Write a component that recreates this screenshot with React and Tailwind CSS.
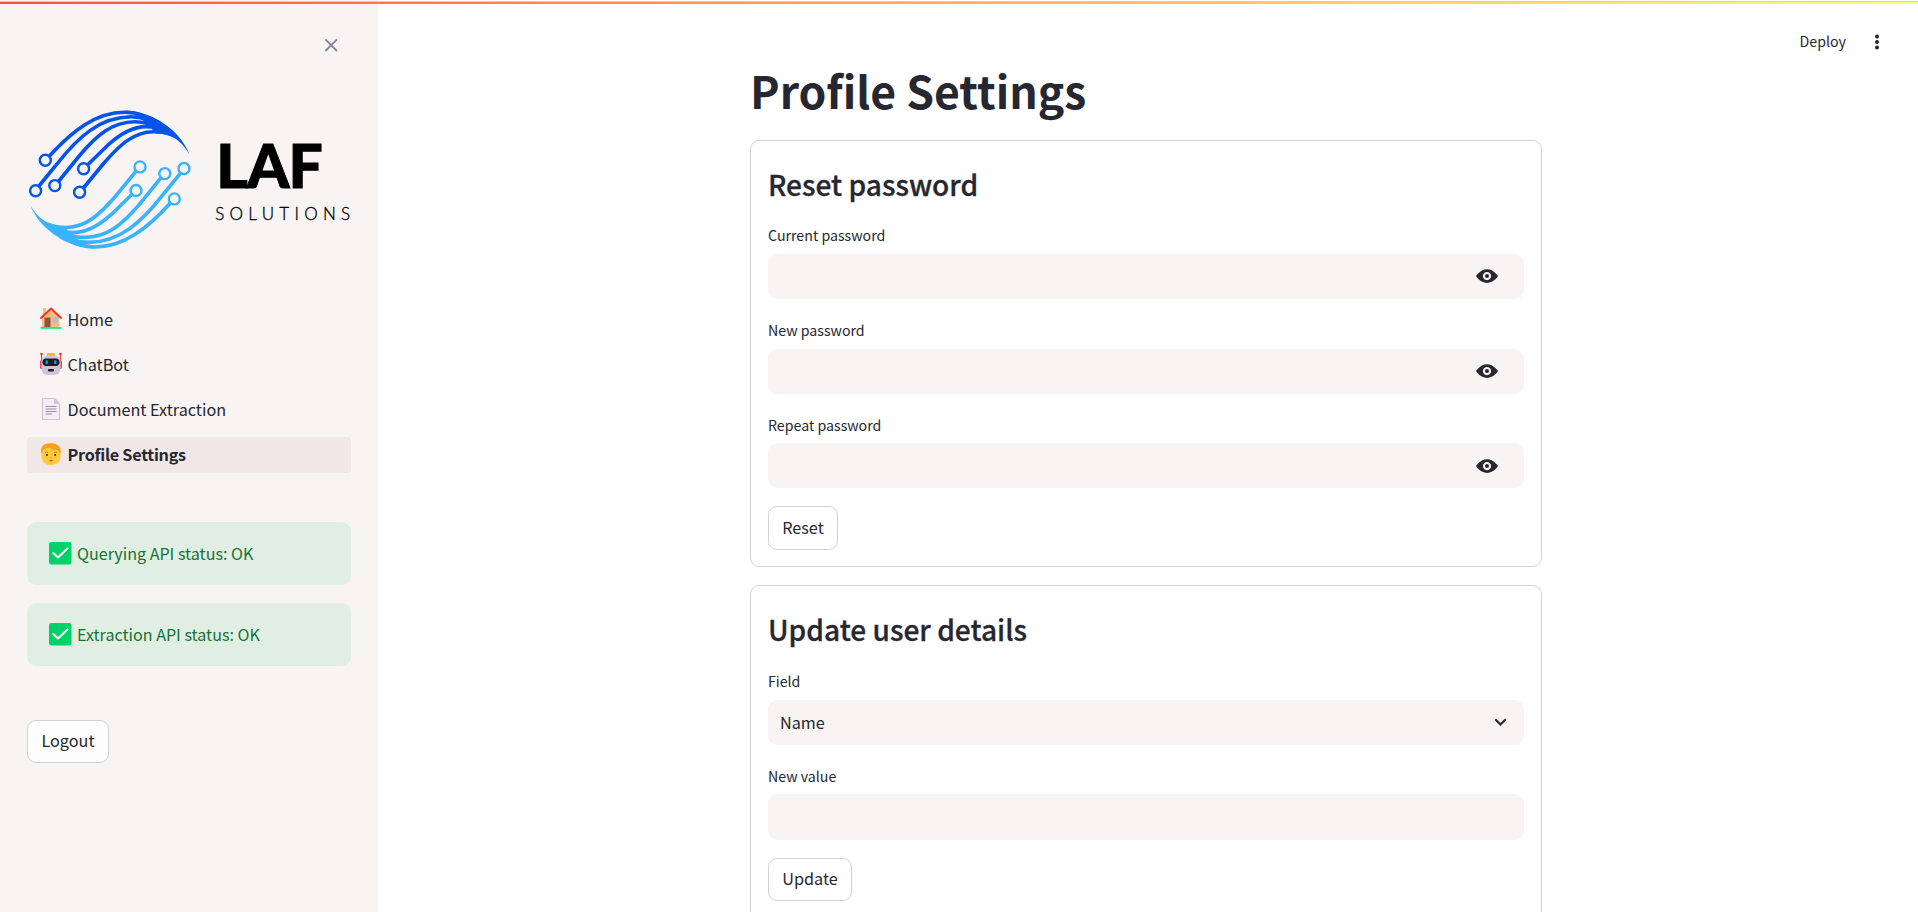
import React from "react";

const Swoosh = () => (
  <>
    <path d="M49.5 156C72 131 96 112 125 112.200C138 112.500 150 117 160 123" />
    <path d="M39 186L57 164C78 137 100 117 131 116.800C145 117 155 122 162 127" />
    <path d="M58.500 181.500L80 155C97 135 112 122 135 121.800C148 121.800 156 126 163 130" />
    <path d="M88 164.500L108 145C120 134 132 126.800 146 126.600C155 126.600 161 129 166 132" />
    <path d="M83.500 188L104 163C119 146 133 131.500 154 131.700C162 131.700 168 133 172 135" />
    <path
      stroke="none"
      fill="currentColor"
      d="M125 110.600C148 111 179 127 189.500 154.500C184 145 175 133.300 155 133.300L152 129L148 124.500L143 120.500L137 116Z"
    />
    <g strokeWidth="2.400">
      <circle cx="45.300" cy="160.300" r="5.500" />
      <circle cx="35.600" cy="190.700" r="5.500" />
      <circle cx="54.800" cy="185.600" r="5.500" />
      <circle cx="83.600" cy="168.700" r="5.500" />
      <circle cx="79.600" cy="192.300" r="5.500" />
    </g>
  </>
);

const Logo = () => (
  <svg width="360" height="180" viewBox="0 90 360 180" className="block shrink-0">
    <g fill="none" stroke="currentColor" strokeWidth="3.600" className="text-[#0554ea]">
      <Swoosh />
    </g>
    <g
      fill="none"
      stroke="currentColor"
      strokeWidth="3.600"
      className="text-[#38b3ff]"
      transform="rotate(180 109.800 179.600)"
    >
      <Swoosh />
    </g>
    <text
      x="216.300"
      y="188"
      fontFamily="Lato, sans-serif"
      fontWeight="900"
      fontSize="60.500"
      stroke="#000"
      strokeWidth="1"
      textLength="106.500"
      lengthAdjust="spacing"
    >
      LAF
    </text>
    <text
      x="215.200"
      y="219.800"
      fontFamily="Lato, sans-serif"
      fontWeight="300"
      fontSize="17"
      stroke="#000"
      strokeWidth=".3"
      textLength="135"
    >
      SOLUTIONS
    </text>
  </svg>
);

const House = () => (
  <svg width="24" height="24" viewBox="0 0 24 24">
    <path fill="#f6bd7c" d="M4 1h3v5l5-4 8 7v12H3V9l1-1z" />
    <path fill="none" stroke="#f8312f" strokeWidth="2" strokeLinecap="round" strokeLinejoin="round" d="M2 11L12 1.500L22 11" />
    <path fill="#8c5543" d="M5.500 10.500h6V20h-6z" />
    <circle cx="10.300" cy="15" r=".6" fill="#4a2c23" />
    <path fill="#83cbff" d="M14 10.500h5v5h-5z" />
    <path fill="#00f387" d="M1.500 20h21v1.800h-21z" />
  </svg>
);

const Robot = () => (
  <svg width="24" height="24" viewBox="0 0 24 24">
    <path stroke="#f8312f" strokeWidth="1" d="M2.500 2v10M21.500 2v10" />
    <circle cx="2.500" cy="2" r="1.300" fill="#f8312f" />
    <circle cx="21.500" cy="2" r="1.300" fill="#f8312f" />
    <rect x="1" y="8" width="3" height="9" rx="1.500" fill="#f3485d" />
    <rect x="20" y="8" width="3" height="9" rx="1.500" fill="#f3485d" />
    <rect x="8" y="1" width="8" height="4" rx="1.300" fill="#ffb02e" />
    <rect x="2.500" y="3.500" width="19" height="19.500" rx="6" fill="#cdc4d6" />
    <rect x="3.500" y="6.500" width="17" height="7.500" rx="3.700" fill="#1c1c22" />
    <rect x="6.600" y="8.300" width="2.200" height="3.900" rx="1" fill="#00a6ed" />
    <rect x="15.200" y="8.300" width="2.200" height="3.900" rx="1" fill="#00a6ed" />
    <rect x="9" y="17" width="6" height="2.600" rx="1" fill="#1c1c22" />
  </svg>
);

const Doc = () => (
  <svg width="24" height="24" viewBox="0 0 24 24">
    <path fill="#f3eef8" stroke="#cdc4d6" strokeWidth="1.100" strokeLinejoin="round" d="M3.500 1.500H15.500L20.500 6.500V22.500H3.500z" />
    <path fill="#cdc4d6" d="M15 1.500L20.500 7H15z" />
    <path stroke="#998ea4" strokeWidth="1" d="M6.500 9.500h11M6.500 12h11M6.500 14.500h11M6.500 17h6.500" />
  </svg>
);

const Face = () => (
  <svg width="24" height="24" viewBox="0 0 24 24">
    <path fill="#ffc83d" d="M2.500 11c0-6 4-8.500 9.500-8.500s9.500 3 9.500 8.500v3c0 6-4 9-9.500 9s-9.500-3-9.500-9z" />
    <path fill="#f59f1c" d="M2 10.500C1.500 4 6 .8 10 1.500C17 0 22 4 22 10.500L20.500 11C20.500 8.500 18.500 8 16 8C13.500 8 12 7 11 5.500C9.500 6 6 6.500 4.500 7C3.500 8 4 10 2.500 11z" />
    <path stroke="#a05a12" strokeWidth=".7" fill="none" d="M6 10.600q1.500-1 3 0M15 10.600q1.500-1 3 0" />
    <circle cx="8" cy="12.900" r="1" fill="#3b2626" />
    <circle cx="16.200" cy="12.900" r="1" fill="#3b2626" />
    <path fill="#f59f1c" d="M11 15h2v1h-2z" />
    <path fill="#c62f45" d="M9.800 18.300h4.600q-2.300 2.300-4.600 0z" />
  </svg>
);

const Check = () => (
  <svg width="24" height="24" viewBox="0 0 24 24" className="mb-px shrink-0">
    <rect x="1" y="1" width="22.500" height="22.500" rx="2.500" fill="#00d26a" />
    <path fill="none" stroke="#fff" strokeWidth="2" strokeLinecap="round" strokeLinejoin="round" d="M5.300 12L10 16.500L19.500 7.500" />
  </svg>
);

const Eye = () => (
  <svg width="22" height="22" viewBox="0 0 8 8" fill="#262730">
    <path d="M4.030 1.500c-2.530 0-4.030 2.500-4.030 2.500s1.500 2.500 4.030 2.500c2.470 0 3.970-2.500 3.970-2.500s-1.500-2.500-3.970-2.500zm-.03 1c.83 0 1.500.67 1.500 1.500s-.67 1.500-1.500 1.500-1.500-.67-1.500-1.500.67-1.500 1.500-1.500zm0 .75a.75.75 0 1 0 0 1.500.75.75 0 0 0 0-1.500z" />
  </svg>
);

const navItems = [
  { label: "Home", icon: <House /> },
  { label: "ChatBot", icon: <Robot /> },
  { label: "Document Extraction", icon: <Doc /> },
  { label: "Profile Settings", icon: <Face />, active: true },
];

const Heading = ({ children }) => (
  <h2 className="h-[85px] pt-[23px] text-[28.1px] leading-[40px] font-medium [-webkit-text-stroke:0.3px_#262730]">
    {children}
  </h2>
);

const Label = ({ children, className = "h-[27px]" }) => (
  <div className={"text-[14.2px] leading-[18px] " + className}>{children}</div>
);

const PasswordField = ({ label, className, labelClass, inputClass = "" }) => (
  <div className={className}>
    <Label className={labelClass}>{label}</Label>
    <div className={"flex h-[45px] items-center justify-end rounded-[9px] bg-[#f8f4f3] pr-[26px] " + inputClass}>
      <Eye />
    </div>
  </div>
);

const Button = ({ children, className }) => (
  <button className={"flex items-center justify-center rounded-[9px] border border-[#d3d3d6] text-[16.2px] " + className}>
    {children}
  </button>
);

const Alert = ({ children }) => (
  <div className="flex h-[63px] items-center gap-[5px] rounded-[9px] bg-[#e1eee3] pl-[21px] text-[16.1px] text-[#177233]">
    <Check />
    <span>{children}</span>
  </div>
);

export default function App() {
  return (
    <div className="relative flex h-[912px] w-[1918px] overflow-hidden bg-white font-['Noto_Sans_CJK_SC','Noto_Sans',sans-serif] text-[#262730]">
      <div className="absolute inset-x-0 top-px h-[3px] border-t border-[#cfcfd2] bg-linear-to-r from-[#ff4b4b] to-[#fffd80]" />
      <aside className="flex w-[378px] shrink-0 flex-col bg-[#f8f4f3]">
        <div className="flex h-[90px] justify-end pt-[38px] pr-[40px]">
          <svg width="14" height="14" viewBox="0 0 14 14" stroke="#808495" strokeWidth="1.800">
            <path d="M1.300 1.300L13 13M13 1.300L1.300 13" />
          </svg>
        </div>
        <Logo />
        <nav className="mt-8 flex flex-col gap-[9px] px-[27px]">
          {navItems.map((n) => (
            <div
              key={n.label}
              className={
                "flex h-9 items-center gap-[4.500px] rounded-[4px] pb-0.5 pl-3 text-[16.2px] " +
                (n.active ? "bg-[#f0e7e6] font-bold tracking-[-0.25px]" : "")
              }
            >
              {n.icon}
              <span>{n.label}</span>
            </div>
          ))}
        </nav>
        <div className="mt-[49px] flex flex-col gap-[18px] px-[27px]">
          <Alert>Querying API status: OK</Alert>
          <Alert>Extraction API status: OK</Alert>
        </div>
        <Button className="mt-[54px] ml-[27px] h-[43px] w-[82px] bg-[#fdfdfd] pb-0.5">Logout</Button>
      </aside>
      <main className="flex grow flex-col pl-[372px]">
        <h1 className="h-[140px] shrink-0 pt-[60px] text-[44.5px] leading-[60px] font-bold">Profile Settings</h1>
        <section className="h-[427px] w-[792px] shrink-0 rounded-[9px] border border-[#d3d3d6] px-[17px]">
          <Heading>Reset password</Heading>
          <PasswordField label="Current password" labelClass="h-[28px]" inputClass="pb-px" />
          <PasswordField label="New password" className="mt-[22px]" labelClass="h-[28px]" inputClass="pb-px" />
          <PasswordField label="Repeat password" className="mt-[22px]" labelClass="h-[27px]" />
          <Button className="mt-[18px] h-[44px] w-[70px] pb-px">Reset</Button>
        </section>
        <section className="mt-[18px] h-[360px] w-[792px] shrink-0 rounded-[9px] border border-[#d3d3d6] px-[17px]">
          <Heading>Update user details</Heading>
          <Label className="h-[29px] pt-px">Field</Label>
          <div className="flex h-[45px] items-center justify-between rounded-[9px] bg-[#f8f4f3] pr-[17px] pl-3 text-[16.2px]">
            <span>Name</span>
            <svg width="13" height="9" viewBox="0 0 13 9" fill="none" stroke="#262730" strokeWidth="2.200" strokeLinecap="round">
              <path d="M2 2L6.500 6.500L11 2" />
            </svg>
          </div>
          <div className="mt-[22px]">
            <Label>New value</Label>
            <div className="h-[46px] rounded-[9px] bg-[#f8f4f3]" />
          </div>
          <Button className="mt-[18px] h-[43px] w-[84px] pb-0.5">Update</Button>
        </section>
      </main>
      <div className="absolute top-[29px] right-[33px] flex h-[26px] items-center gap-[23px]">
        <span className="text-[14.2px]">Deploy</span>
        <svg width="16" height="18" viewBox="0 0 16 18" fill="#262730">
          <circle cx="8" cy="3.500" r="2" />
          <circle cx="8" cy="9" r="2" />
          <circle cx="8" cy="14.500" r="2" />
        </svg>
      </div>
    </div>
  );
}
